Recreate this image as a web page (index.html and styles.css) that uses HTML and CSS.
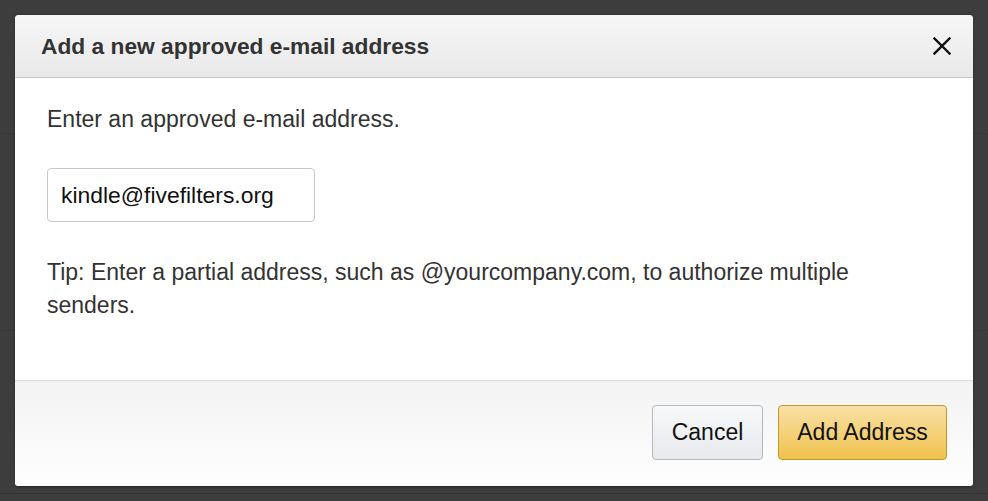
FILE: index.html
```html
<!DOCTYPE html>
<html lang="en">
<head>
<meta charset="utf-8">
<title>Add a new approved e-mail address</title>
<link rel="stylesheet" href="styles.css">
</head>
<body>
<div class="dialog" role="dialog" aria-labelledby="dlg-title">
  <header class="dialog-header">
    <h2 id="dlg-title" class="dialog-title">Add a new approved e-mail address</h2>
    <button class="close-btn" aria-label="Close">
      <svg width="18" height="18" viewBox="0 0 18 18" aria-hidden="true">
        <path d="M1.5 1.5 L16.5 16.5 M16.5 1.5 L1.5 16.5" stroke="#111" stroke-width="2.4" stroke-linecap="square" fill="none"/>
      </svg>
    </button>
  </header>
  <div class="dialog-body">
    <p class="intro">Enter an approved e-mail address.</p>
    <input class="email-input" type="text" value="kindle@fivefilters.org">
    <p class="tip">Tip: Enter a partial address, such as @yourcompany.com, to authorize multiple senders.</p>
  </div>
  <footer class="dialog-footer">
    <button class="btn btn-secondary">Cancel</button>
    <button class="btn btn-primary">Add Address</button>
  </footer>
</div>
</body>
</html>
```

FILE: styles.css
```css
html, body {
  margin: 0;
  padding: 0;
}

body {
  height: 501px;
  overflow: hidden;
  padding: 15px;
  box-sizing: border-box;
  font-family: "Liberation Sans", Arial, sans-serif;
  font-size: 23px;
  color: #333;
  background:
    linear-gradient(to bottom,
      transparent 0, transparent 133px,
      #373737 133px, #373737 134px,
      transparent 134px, transparent 330px,
      #373737 330px, #373737 331px,
      transparent 331px, transparent 493px,
      #343434 493px, #343434 494px,
      transparent 494px),
    #3d3d3d;
}

.dialog {
  width: 958px;
  height: 472px;
  box-sizing: border-box;
  display: flex;
  flex-direction: column;
  background: #fff;
  border-radius: 4px;
  border-bottom: 1px solid #2a2a2a;
  overflow: hidden;
  box-shadow: 0 0 3px rgba(0, 0, 0, 0.35);
}

.dialog-header {
  height: 62px;
  flex: 0 0 auto;
  display: flex;
  align-items: center;
  justify-content: space-between;
  padding: 0 22px 0 26px;
  background: linear-gradient(to bottom, #f6f6f6, #e9e9e9);
  border-bottom: 1px solid #c9c9c9;
}

.dialog-title {
  margin: 0;
  font-size: 22.75px;
  font-weight: bold;
  color: #333;
  line-height: 1;
}

.close-btn {
  border: 0;
  background: none;
  padding: 0;
  margin: 0;
  width: 18px;
  height: 18px;
  display: flex;
  cursor: pointer;
  margin-top: -1px;
}

.dialog-body {
  flex: 1 1 auto;
  padding: 24.5px 32px 0;
  line-height: 33.25px;
}

.intro {
  margin: 0;
}

.email-input {
  display: block;
  margin-top: 32.25px;
  width: 268px;
  height: 54px;
  box-sizing: border-box;
  padding: 0 13px;
  border: 1px solid #c8c8c8;
  border-radius: 4px;
  font-family: inherit;
  font-size: 22.9px;
  color: #111;
  background: #fff;
  outline: none;
}

.tip {
  margin: 33.5px 0 0;
  max-width: 860px;
}

.dialog-footer {
  flex: 0 0 auto;
  height: 106px;
  box-sizing: border-box;
  display: flex;
  justify-content: flex-end;
  align-items: flex-start;
  gap: 15px;
  padding: 24px 26px 0;
  border-top: 1px solid #dcdcdc;
  background: linear-gradient(to bottom, #f3f3f3, #fefefe);
}

.btn {
  height: 55px;
  box-sizing: border-box;
  padding: 0 18px;
  border-radius: 4px;
  font-family: inherit;
  font-size: 23px;
  color: #111;
  cursor: pointer;
}

.btn-secondary {
  width: 111px;
  border: 1px solid #b4b7bc;
  background: linear-gradient(to bottom, #f7f8fa, #e7e9ec);
}

.btn-primary {
  width: 169px;
  border: 1px solid #c1982e;
  background: linear-gradient(to bottom, #f8e0a6, #f0c24d);
}
```
